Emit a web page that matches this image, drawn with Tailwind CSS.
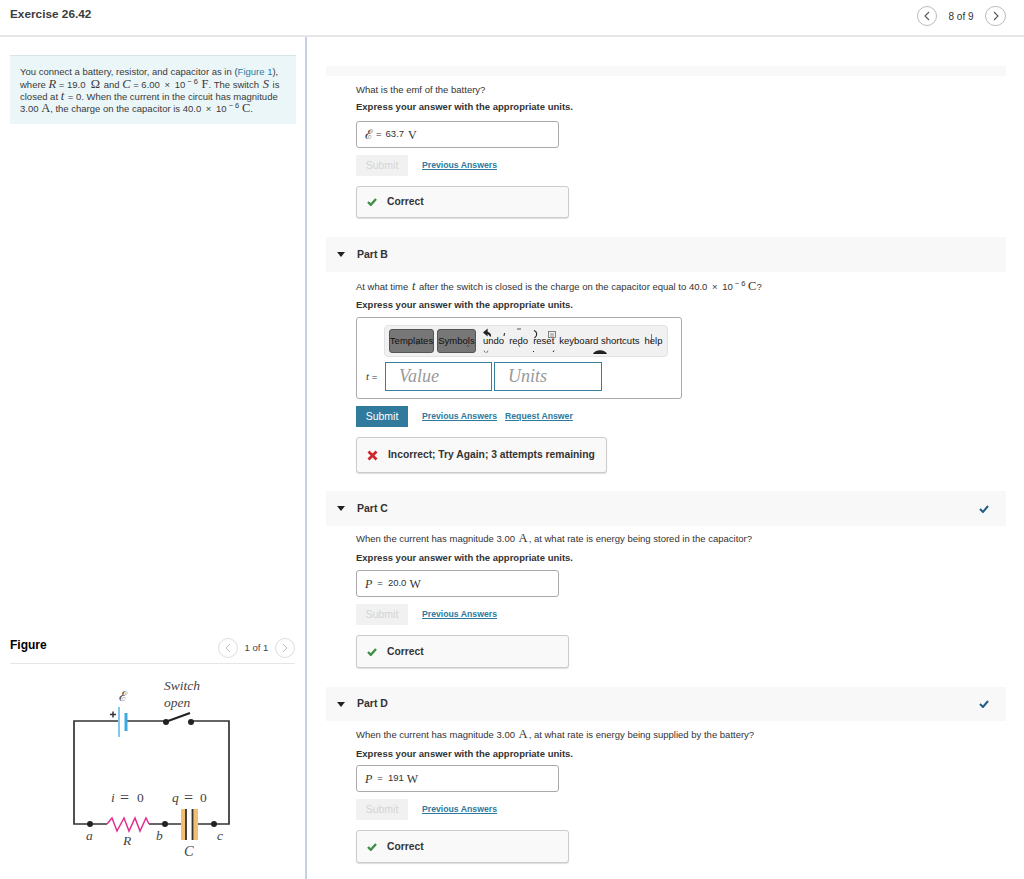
<!DOCTYPE html>
<html lang="en">
<head>
    <meta charset="UTF-8">
    <title>Exercise 26.42</title>
    <script src="https://cdn.jsdelivr.net/npm/@tailwindcss/browser@4"></script>
</head>
<body class="bg-white font-['Liberation_Sans',Arial,sans-serif] text-[#333] h-[879px] overflow-hidden">
    <!-- Header -->
    <header class="h-[37px] border-b-2 border-[#e6e6e6] flex items-center justify-between pl-[10px] pr-[18px] pb-[5px]">
        <h1 class="text-[11.8px] font-bold text-[#3b3b3b]">Exercise 26.42</h1>
        <div class="flex items-center text-[10px] text-[#333] pt-[2px]">
            <span class="w-[20px] h-[20px] rounded-full border border-[#bbb] flex items-center justify-center">
                <svg width="8" height="10" viewBox="0 0 8 10" fill="none" stroke="#555" stroke-width="1.1"><path d="M6 1 2 5l4 4"/></svg>
            </span>
            <span class="w-[48px] text-center">8 of 9</span>
            <span class="w-[21px] h-[20px] rounded-full border border-[#bbb] flex items-center justify-center">
                <svg width="8" height="10" viewBox="0 0 8 10" fill="none" stroke="#555" stroke-width="1.1"><path d="M2 1l4 4-4 4"/></svg>
            </span>
        </div>
    </header>

    <div class="flex">
        <!-- Left column -->
        <aside class="w-[307px] h-[842px] shrink-0 border-r-2 border-[#c3d3e3] pl-[10px] pr-[9px] pt-[18px]">
            <div class="h-[69px] bg-[#ebf6f8] border-t border-[#d5e5e8] pl-[10px] pt-[10px] text-[9.5px] text-[#3a3a3a]">
                <p class="h-[12px] leading-[12px] whitespace-nowrap">You connect a battery, resistor, and capacitor as in (<span class="text-[#2b7ea1]">Figure 1</span>),</p>
                <p class="h-[12px] leading-[12px] whitespace-nowrap">where <i class="font-['Liberation_Serif',serif] text-[12.5px] leading-[12px]">R</i> = 19.0 &nbsp;<span class="font-['Liberation_Serif',serif] text-[12.5px] leading-[12px] mr-[1px]">Ω</span> and <i class="font-['Liberation_Serif',serif] text-[12.5px] leading-[12px]">C</i> = 6.00 <span class="mx-[2px]">×</span> 10<sup class="text-[7.5px] leading-none ml-[2px]">− 6</sup> <span class="font-['Liberation_Serif',serif] text-[12.5px] leading-[12px] ml-[1px]">F</span>. The switch <i class="font-['Liberation_Serif',serif] text-[12.5px] leading-[12px] mx-[1px]">S</i> is</p>
                <p class="h-[12px] leading-[12px] whitespace-nowrap">closed at <i class="font-['Liberation_Serif',serif] text-[12.5px] leading-[12px] mr-[1px]">t</i> = 0. When the current in the circuit has magnitude</p>
                <p class="h-[12px] leading-[12px] whitespace-nowrap">3.00 <span class="font-['Liberation_Serif',serif] text-[12.5px] leading-[12px]">A</span>, the charge on the capacitor is 40.0 <span class="mx-[2px]">×</span> 10<sup class="text-[7.5px] leading-none ml-[2px]">− 6</sup> <span class="font-['Liberation_Serif',serif] text-[12.5px] leading-[12px]">C</span>.</p>
            </div>

            <!-- Figure -->
            <div class="mt-[513px] mr-[1px] h-[27px] border-b border-[#e6e6e6] flex items-start justify-between">
                <h2 class="text-[12px] font-bold text-black leading-[17px]">Figure</h2>
                <div class="flex items-center text-[9.5px] text-[#444] mt-[1px]">
                    <span class="w-[20px] h-[20px] rounded-full border border-[#ddd] flex items-center justify-center">
                        <svg width="8" height="10" viewBox="0 0 8 10" fill="none" stroke="#bbb" stroke-width="1"><path d="M6 1 2 5l4 4"/></svg>
                    </span>
                    <span class="w-[37px] text-center">1 of 1</span>
                    <span class="w-[20px] h-[20px] rounded-full border border-[#ddd] flex items-center justify-center">
                        <svg width="8" height="10" viewBox="0 0 8 10" fill="none" stroke="#bbb" stroke-width="1"><path d="M2 1l4 4-4 4"/></svg>
                    </span>
                </div>
            </div>
            <svg class="block -ml-[10px]" width="295" height="200" viewBox="0 664 295 200">
                <g fill="none" stroke="#333" stroke-width="1.700">
                    <path d="M118 721H74V824H107"/>
                    <path d="M127 721H166"/>
                    <path d="M191 721H229V824H213"/>
                    <path d="M149 824H182M193 824H213"/>
                </g>
                <path d="M168 721 190 713" stroke="#222" stroke-width="2.200"/>
                <path d="M119 707V737" stroke="#5bb4e8" stroke-width="1.500"/>
                <path d="M126 713V731" stroke="#3fa9e6" stroke-width="3"/>
                <path d="M110 714.500h6M113 711.500v6" stroke="#333" stroke-width="1.500"/>
                <path d="M107 824 112 818 117 831 124 818 129 831 135 818 140 831 146 818 149 824" fill="none" stroke="#e0308e" stroke-width="1.500"/>
                <rect x="181" y="809" width="5.500" height="31" fill="#f3be72"/>
                <rect x="192.500" y="809" width="5.500" height="31" fill="#f3be72"/>
                <path d="M186 809V840M192.500 809V840" stroke="#333" stroke-width="1.800"/>
                <g fill="#222">
                    <circle cx="90" cy="824" r="3"/>
                    <circle cx="165" cy="824" r="3"/>
                    <circle cx="214" cy="824" r="3"/>
                    <circle cx="166" cy="722" r="3"/>
                    <circle cx="191" cy="722" r="3"/>
                </g>
                <g font-family="Liberation Serif, serif" font-style="italic" font-size="13.500" fill="#444">
                    <text x="164" y="690">Switch</text>
                    <text x="164" y="707">open</text>
                    <text x="111" y="802">i</text>
                    <text x="172" y="802">q</text>
                    <text x="86" y="840">a</text>
                    <text x="123" y="845">R</text>
                    <text x="156" y="840">b</text>
                    <text x="217" y="840">c</text>
                    <text x="184" y="856" font-size="14.500">C</text>
                </g>
                <text x="119" y="701" font-family="Liberation Serif, serif" font-size="13.500" fill="#444">ℰ</text>
                <g font-family="Liberation Serif, serif" font-size="13.500" fill="#444">
                    <text x="120" y="803" font-size="16">=</text>
                    <text x="137" y="802">0</text>
                    <text x="184" y="803" font-size="16">=</text>
                    <text x="200" y="802">0</text>
                </g>
            </svg>
        </aside>

        <!-- Right column -->
        <main class="flex-1 pl-[19px] pr-[18px] pt-[29px] min-w-0">
            <div class="h-[10px] bg-[#f8f8f8]"></div>
            <div class="pl-[30px]">
                <p class="mt-[8px] text-[9.5px] leading-[12px]">What is the emf of the battery?</p>
                <p class="mt-[5px] text-[9.5px] leading-[12px] font-bold">Express your answer with the appropriate units.</p>
                <div class="mt-[8px] w-[203px] h-[27px] border border-[#aaa] rounded-[3px] flex items-center pl-[8px] text-[9.5px]"><span class="font-['Liberation_Serif',serif] text-[13px]">ℰ</span><span class="ml-[3px]">=</span><span class="ml-[4px]">63.7</span><span class="ml-[4px] font-['Liberation_Serif',serif] text-[12px]">V</span></div>
                <div class="mt-[7px] flex items-center">
                    <span class="w-[52px] h-[21px] bg-[#f1f1f1] text-[#d4d4d4] text-[10.5px] flex items-center justify-center">Submit</span>
                    <a class="ml-[14px] text-[8.7px] font-bold text-[#2d7a9c] underline">Previous Answers</a>
                </div>
                <div class="mt-[10px] w-[213px] h-[32px] bg-[#f9f9f9] border border-[#ccc] rounded-[3px] shadow-[0_1px_1px_#ddd] flex items-center pl-[10px] text-[10.3px] font-bold">
                    <svg class="mr-[10px]" width="10" height="8" viewBox="0 0 10 8"><path d="M1 4l2.800 2.800L9 1" fill="none" stroke="#3f8f46" stroke-width="2.400"/></svg>Correct
                </div>
            </div>

            <!-- Part B -->
            <div class="mt-[19px] h-[35px] bg-[#f8f8f8] flex items-center pl-[11px] text-[10.5px] font-bold">
                <svg width="8" height="5" viewBox="0 0 8 5"><path d="M0 0h8L4 5z" fill="#222"/></svg>
                <span class="ml-[12px]">Part B</span>
            </div>
            <div class="pl-[30px]">
                <p class="mt-[8px] h-[12px] text-[9.5px] leading-[12px] whitespace-nowrap">At what time <i class="font-['Liberation_Serif',serif] text-[12.5px] leading-[12px] mx-[1px]">t</i> after the switch is closed is the charge on the capacitor equal to 40.0 <span class="mx-[2px]">×</span> 10<sup class="text-[7.5px] leading-none ml-[2px]">− 6</sup> <span class="font-['Liberation_Serif',serif] text-[12.5px] leading-[12px]">C</span>?</p>
                <p class="mt-[7px] text-[9.5px] leading-[12px] font-bold">Express your answer with the appropriate units.</p>
                <div class="mt-[6px] w-[326px] h-[82px] border border-[#aaa] rounded-[3px] pl-[9px] pt-[7px]">
                    <div class="relative ml-[18px] w-[284px] h-[32px] bg-[#f1f1f1] border border-[#e2e2e2] rounded-[4px] flex items-center pl-[4px] text-[9.5px] text-[#111] whitespace-nowrap">
                        <span class="w-[45px] h-[24px] bg-[#777] border border-[#555] rounded-[3px] flex items-center justify-center">Templates</span>
                        <span class="ml-[3px] w-[39px] h-[24px] bg-[#777] border border-[#555] rounded-[3px] flex items-center justify-center">Symbols</span>
                        <span class="ml-[7px]">undo</span>
                        <span class="ml-[5px]">redo</span>
                        <span class="ml-[5px]">reset</span>
                        <span class="ml-[5px]">keyboard shortcuts</span>
                        <span class="ml-[5px]">help</span>
                        <!-- toolbar icons that sit out of place over the labels -->
                        <svg class="absolute -left-[1px] -top-[4px]" width="284" height="38" viewBox="384 322 284 38" fill="none" stroke="#222">
                            <path d="M484 332.500l3-2.500v5zM486 332.500c3 0 4.500 1.500 4.500 4" fill="#222" stroke-width="1.300"/>
                            <path d="M504.500 333l-.5 3" stroke-width="1"/>
                            <path d="M517 329h4" stroke-width="1" stroke="#555"/>
                            <path d="M534 330.500c3 1 4 5 .5 7.500" stroke-width="1.100"/>
                            <rect x="548.500" y="331.500" width="7" height="6" stroke="#666" stroke-width="0.800"/>
                            <path d="M550 334h4M550 336h4" stroke="#666" stroke-width="0.700"/>
                            <path d="M484 350.500l1 2M488 350.500l-1.500 2.500" stroke-width="0.800" stroke="#555"/>
                            <path d="M533 351l1 1M553 352l1-1.500" stroke-width="1"/>
                            <path d="M593 354c2-5 12-5 14 0z" fill="#222" stroke="none"/>
                            <path d="M651.500 334v10" stroke="#444" stroke-width="0.700"/>
                            <path d="M417 345l1.500-4M467 345l2 2M518 344l2 3" stroke="#333" stroke-width="0.800"/>
                        </svg>
                    </div>
                    <div class="mt-[5px] flex items-center">
                        <span class="w-[19px] text-[9.5px]"><i class="font-['Liberation_Serif',serif] text-[11px]">t</i> =</span>
                        <span class="w-[107px] h-[29px] border border-[#3a7f9f] flex items-center pl-[13px] font-['Liberation_Serif',serif] italic text-[18px] text-[#999]">Value</span>
                        <span class="ml-[2px] w-[108px] h-[29px] border border-[#3a7f9f] flex items-center pl-[13px] font-['Liberation_Serif',serif] italic text-[18px] text-[#999]">Units</span>
                    </div>
                </div>
                <div class="mt-[7px] flex items-center">
                    <span class="w-[52px] h-[21px] bg-[#2f7a9d] text-white text-[10.5px] flex items-center justify-center">Submit</span>
                    <a class="ml-[14px] text-[8.7px] font-bold text-[#2d7a9c] underline">Previous Answers</a>
                    <a class="ml-[8px] text-[8.7px] font-bold text-[#2d7a9c] underline">Request Answer</a>
                </div>
                <div class="mt-[10px] w-[251px] h-[36px] bg-[#f9f9f9] border border-[#ccc] rounded-[3px] shadow-[0_1px_1px_#ddd] flex items-center pl-[10px] text-[10.3px] font-bold">
                    <svg class="mr-[10px]" width="11" height="11" viewBox="0 0 11 11"><path d="M1.500 1.500l8 8M9.500 1.500l-8 8" fill="none" stroke="#d0242b" stroke-width="2.800"/></svg>Incorrect; Try Again; 3 attempts remaining
                </div>
            </div>

            <!-- Part C -->
            <div class="mt-[18px] h-[35px] bg-[#f8f8f8] flex items-center pl-[11px] pr-[17px] text-[10.5px] font-bold">
                <svg width="8" height="5" viewBox="0 0 8 5"><path d="M0 0h8L4 5z" fill="#222"/></svg>
                <span class="ml-[12px]">Part C</span>
                <svg class="ml-auto" width="10" height="8" viewBox="0 0 10 8"><path d="M1 4l3 3 5-6" fill="none" stroke="#1f5f85" stroke-width="2"/></svg>
            </div>
            <div class="pl-[30px]">
                <p class="mt-[6px] h-[12px] text-[9.5px] leading-[12px] whitespace-nowrap">When the current has magnitude 3.00 <span class="font-['Liberation_Serif',serif] text-[12.5px] leading-[12px] mx-[1px]">A</span>, at what rate is energy being stored in the capacitor?</p>
                <p class="mt-[8px] text-[9.5px] leading-[12px] font-bold">Express your answer with the appropriate units.</p>
                <div class="mt-[6px] w-[203px] h-[27px] border border-[#aaa] rounded-[3px] flex items-center pl-[8px] text-[9.5px]"><i class="font-['Liberation_Serif',serif] text-[12px]">P</i><span class="ml-[5px]">=</span><span class="ml-[5px]">20.0</span><span class="ml-[3px] font-['Liberation_Serif',serif] text-[12px]">W</span></div>
                <div class="mt-[7px] flex items-center">
                    <span class="w-[52px] h-[21px] bg-[#f1f1f1] text-[#d4d4d4] text-[10.5px] flex items-center justify-center">Submit</span>
                    <a class="ml-[14px] text-[8.7px] font-bold text-[#2d7a9c] underline">Previous Answers</a>
                </div>
                <div class="mt-[10px] w-[213px] h-[33px] bg-[#f9f9f9] border border-[#ccc] rounded-[3px] shadow-[0_1px_1px_#ddd] flex items-center pl-[10px] text-[10.3px] font-bold">
                    <svg class="mr-[10px]" width="10" height="8" viewBox="0 0 10 8"><path d="M1 4l2.800 2.800L9 1" fill="none" stroke="#3f8f46" stroke-width="2.400"/></svg>Correct
                </div>
            </div>

            <!-- Part D -->
            <div class="mt-[19px] h-[34px] bg-[#f8f8f8] flex items-center pl-[11px] pr-[17px] text-[10.5px] font-bold">
                <svg width="8" height="5" viewBox="0 0 8 5"><path d="M0 0h8L4 5z" fill="#222"/></svg>
                <span class="ml-[12px]">Part D</span>
                <svg class="ml-auto" width="10" height="8" viewBox="0 0 10 8"><path d="M1 4l3 3 5-6" fill="none" stroke="#1f5f85" stroke-width="2"/></svg>
            </div>
            <div class="pl-[30px]">
                <p class="mt-[7px] h-[12px] text-[9.5px] leading-[12px] whitespace-nowrap">When the current has magnitude 3.00 <span class="font-['Liberation_Serif',serif] text-[12.5px] leading-[12px] mx-[1px]">A</span>, at what rate is energy being supplied by the battery?</p>
                <p class="mt-[8px] text-[9.5px] leading-[12px] font-bold">Express your answer with the appropriate units.</p>
                <div class="mt-[5px] w-[203px] h-[27px] border border-[#aaa] rounded-[3px] flex items-center pl-[8px] text-[9.5px]"><i class="font-['Liberation_Serif',serif] text-[12px]">P</i><span class="ml-[5px]">=</span><span class="ml-[5px]">191</span><span class="ml-[3px] font-['Liberation_Serif',serif] text-[12px]">W</span></div>
                <div class="mt-[7px] flex items-center">
                    <span class="w-[52px] h-[21px] bg-[#f1f1f1] text-[#d4d4d4] text-[10.5px] flex items-center justify-center">Submit</span>
                    <a class="ml-[14px] text-[8.7px] font-bold text-[#2d7a9c] underline">Previous Answers</a>
                </div>
                <div class="mt-[10px] w-[213px] h-[33px] bg-[#f9f9f9] border border-[#ccc] rounded-[3px] shadow-[0_1px_1px_#ddd] flex items-center pl-[10px] text-[10.3px] font-bold">
                    <svg class="mr-[10px]" width="10" height="8" viewBox="0 0 10 8"><path d="M1 4l2.800 2.800L9 1" fill="none" stroke="#3f8f46" stroke-width="2.400"/></svg>Correct
                </div>
            </div>
        </main>
    </div>
</body>
</html>
